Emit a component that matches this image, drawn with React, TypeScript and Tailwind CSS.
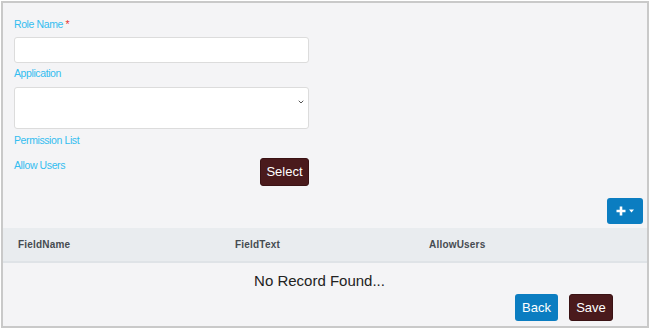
import { ChevronDown } from "lucide-react";

const font = { fontFamily: '"Liberation Sans", Arial, sans-serif' };

function Label({ children }: { children: React.ReactNode }) {
    return <div className="text-[10.5px] leading-[13px] tracking-[-0.4px] text-[#33bdf0]">{children}</div>;
}

export default function App() {
    return (
        <div className="w-[653px] h-[331px] bg-white pl-[1px] pt-[1px]" style={font}>
            <div className="w-[648px] h-[327px] border-2 border-[#c9c9c9] bg-[#f4f4f6] flex flex-col">
                {/* Form */}
                <div className="pl-[11px] pt-[15px] w-[306px]">
                    <Label>
                        Role Name <span className="text-[#e53935]">*</span>
                    </Label>
                    <input className="mt-[6px] block w-[295px] h-[26px] bg-white border border-[#dcdcdc] rounded-[3px]" />

                    <div className="mt-[4px]">
                        <Label>Application</Label>
                    </div>
                    <div className="mt-[7px] w-[295px] h-[42px] bg-white border border-[#dcdcdc] rounded-[3px] flex justify-end pt-[10px] pr-[3px]">
                        <ChevronDown className="w-[8px] h-[8px] text-[#555]" strokeWidth={3} />
                    </div>

                    <div className="mt-[5px]">
                        <Label>Permission List</Label>
                    </div>

                    <div className="mt-[11px] flex items-start justify-between">
                        <div className="mt-[1px]">
                            <Label>Allow Users</Label>
                        </div>
                        <button className="w-[49px] h-[28px] bg-[#4a1a1c] text-white text-[13px] rounded-[3px] border border-[#3a1214]">
                            Select
                        </button>
                    </div>
                </div>

                {/* Add button */}
                <div className="mt-[12px] flex justify-end pr-[4px]">
                    <button className="w-[36px] h-[26px] bg-[#0b7dc1] rounded-[3px] flex items-center justify-center gap-[3px]">
                        <svg width="10" height="10" viewBox="0 0 10 10">
                            <path d="M5 0.5v9M0.5 5h9" stroke="white" strokeWidth="2.6" />
                        </svg>
                        <svg width="5" height="4" viewBox="0 0 5 4">
                            <path d="M0 0.5h5L2.5 3.5z" fill="white" />
                        </svg>
                    </button>
                </div>

                {/* Table */}
                <div className="mt-[4px] h-[35px] bg-[#e9ecef] border-b-2 border-[#dfe3e7] grid grid-cols-[216px_194px_1fr] items-center text-[10px] tracking-[0.2px] font-bold text-[#464b51]">
                    <div className="pl-[15px]">FieldName</div>
                    <div className="pl-[16px]">FieldText</div>
                    <div className="pl-[16px]">AllowUsers</div>
                </div>
                <div className="mt-[9px] pr-[11px] text-center text-[15px] leading-[18px] text-[#222]">No Record Found...</div>

                {/* Actions */}
                <div className="mt-[4px] flex justify-end gap-[11px] pr-[34px]">
                    <button className="w-[43px] h-[27px] bg-[#0b7dc1] text-white text-[13px] rounded-[3px]">Back</button>
                    <button className="w-[44px] h-[27px] bg-[#4a1a1c] text-white text-[13px] rounded-[3px] border border-[#3a1214]">
                        Save
                    </button>
                </div>
            </div>
        </div>
    );
}
